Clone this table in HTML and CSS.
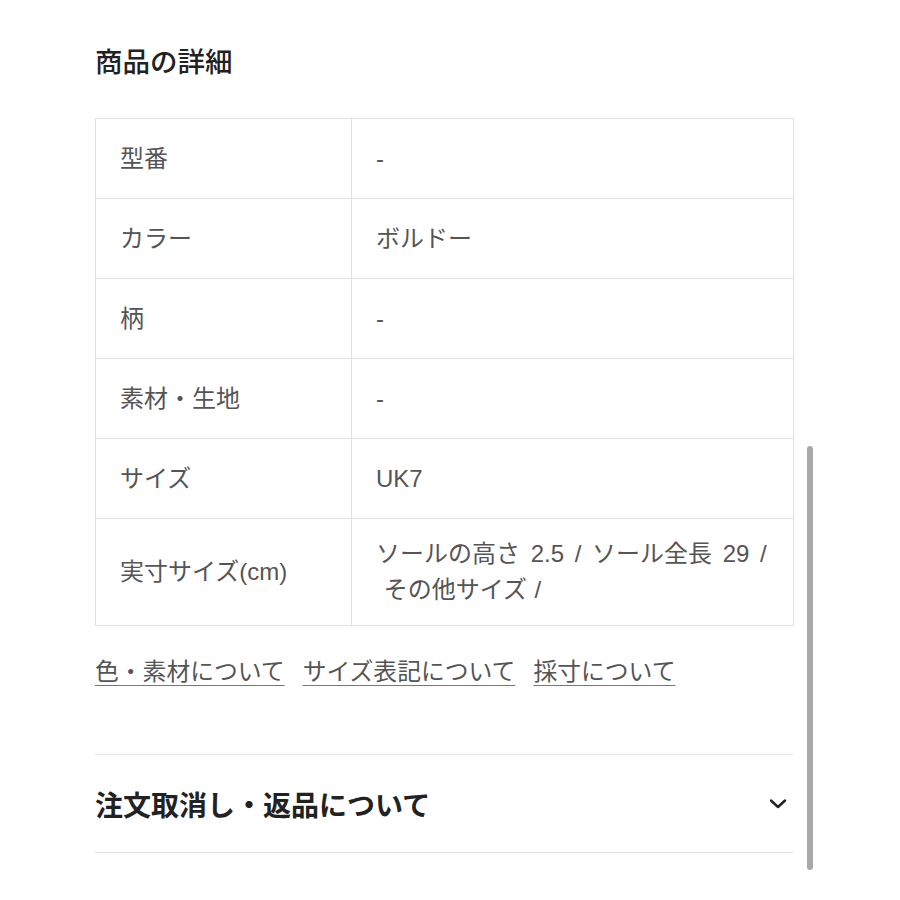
FILE: index.html
```html
<!DOCTYPE html>
<html lang="ja">
<head>
<meta charset="utf-8">
<title>商品の詳細</title>
<link rel="stylesheet" href="styles.css">
</head>
<body>
<main class="page">
  <h2 class="title">商品の詳細</h2>
  <table class="spec">
    <tr><th>型番</th><td>-</td></tr>
    <tr><th>カラー</th><td>ボルドー</td></tr>
    <tr><th>柄</th><td>-</td></tr>
    <tr><th>素材・生地</th><td>-</td></tr>
    <tr><th>サイズ</th><td>UK7</td></tr>
    <tr><th>実寸サイズ(cm)</th><td class="multi"><span class="line">ソールの高さ 2.5 / ソール全長 29 /</span><span class="line second">&nbsp;その他サイズ /</span></td></tr>
  </table>
  <nav class="links">
    <a href="#">色・素材について</a>
    <a href="#">サイズ表記について</a>
    <a href="#">採寸について</a>
  </nav>
  <div class="accordion">
    <span class="acc-title">注文取消し・返品について</span>
    <svg class="chev" width="18" height="10" viewBox="0 0 18 10"><path d="M2 1.5 L9 8 L16 1.5" fill="none" stroke="#222" stroke-width="2.4" stroke-linecap="round" stroke-linejoin="round"/></svg>
  </div>
</main>
<div class="scrollbar"></div>
</body>
</html>
```

FILE: styles.css
```css
html, body {
  margin: 0;
  padding: 0;
  background: #fff;
}
body {
  font-family: "Noto Sans CJK JP", "Noto Sans", sans-serif;
  color: #555;
}
.page {
  width: 698px;
  margin-left: 95px;
  padding-top: 42px;
}
.title {
  margin: 0;
  font-size: 27.5px;
  line-height: 36px;
  font-weight: 500;
  color: #222;
}
.spec {
  margin-top: 40px;
  width: 699px;
  border-collapse: collapse;
  font-family: "Liberation Sans", "Noto Sans CJK JP", sans-serif;
  font-size: 24px;
  color: #555;
}
.spec th, .spec td {
  border: 1px solid #e2e2e2;
  height: 80px;
  box-sizing: border-box;
  padding: 18px 24px;
  line-height: 36px;
  font-weight: 400;
  text-align: left;
  vertical-align: middle;
}
.spec th {
  width: 256px;
}
.spec td.multi {
  word-spacing: 4px;
  padding-top: 17px;
  padding-bottom: 17px;
  padding-right: 8px;
}
.line {
  display: block;
  white-space: nowrap;
}
.line.second {
  word-spacing: 1px;
}
.links {
  margin-top: 26px;
  display: flex;
  gap: 18px;
  font-size: 23.8px;
  line-height: 36px;
}
.links a {
  color: #555;
  text-decoration: underline;
  text-decoration-color: #777;
  text-underline-offset: 5px;
  text-decoration-thickness: 1px;
}
.accordion {
  margin-top: 66px;
  border-top: 1px solid #e4e4e4;
  border-bottom: 1px solid #e4e4e4;
  height: 99px;
  display: flex;
  align-items: center;
  justify-content: space-between;
  width: 698px;
  box-sizing: border-box;
}
.acc-title {
  font-size: 28px;
  font-weight: 700;
  color: #222;
}
.chev {
  margin-right: 6px;
}
.scrollbar {
  position: fixed;
  left: 807px;
  top: 446px;
  width: 6px;
  height: 424px;
  border-radius: 3px;
  background: #a8a8a8;
}
```
